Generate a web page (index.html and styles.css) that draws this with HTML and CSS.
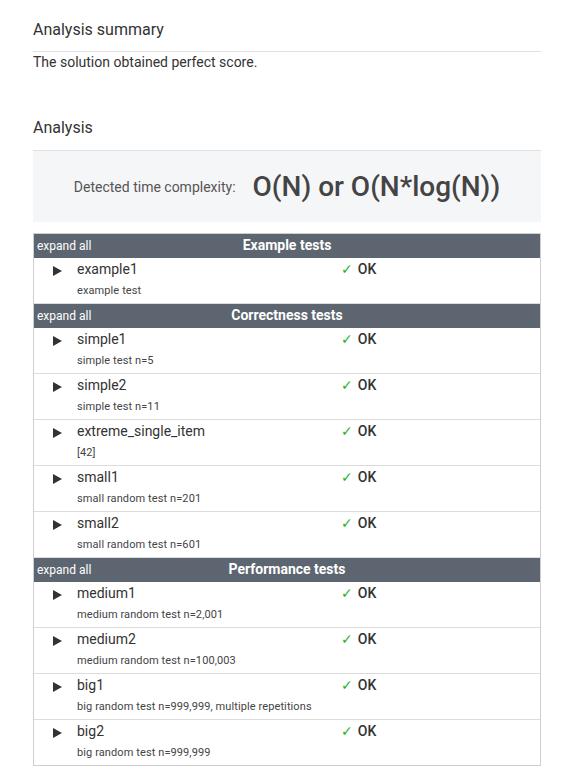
FILE: index.html
```html
<!DOCTYPE html>
<html>
<head>
<meta charset="utf-8">
<link rel="stylesheet" href="styles.css">
</head>
<body>
<div class="page">
  <h2 class="heading">Analysis summary</h2>
  <div class="summary">The solution obtained perfect score.</div>

  <h2 class="heading heading-analysis">Analysis</h2>
  <div class="complexity">
    <span class="complexity-label">Detected time complexity:</span>
    <span class="complexity-value">O(N) or O(N*log(N))</span>
  </div>

  <div class="tests">
    <div class="group-head"><span class="expand">expand all</span><span class="group-title">Example tests</span></div>
    <div class="row"><span class="arrow"></span><div class="name">example1<div class="desc">example test</div></div><div class="result"><span class="check">✓</span>OK</div></div>

    <div class="group-head"><span class="expand">expand all</span><span class="group-title">Correctness tests</span></div>
    <div class="row"><span class="arrow"></span><div class="name">simple1<div class="desc">simple test n=5</div></div><div class="result"><span class="check">✓</span>OK</div></div>
    <div class="row"><span class="arrow"></span><div class="name">simple2<div class="desc">simple test n=11</div></div><div class="result"><span class="check">✓</span>OK</div></div>
    <div class="row"><span class="arrow"></span><div class="name">extreme_single_item<div class="desc">[42]</div></div><div class="result"><span class="check">✓</span>OK</div></div>
    <div class="row"><span class="arrow"></span><div class="name">small1<div class="desc">small random test n=201</div></div><div class="result"><span class="check">✓</span>OK</div></div>
    <div class="row"><span class="arrow"></span><div class="name">small2<div class="desc">small random test n=601</div></div><div class="result"><span class="check">✓</span>OK</div></div>

    <div class="group-head"><span class="expand">expand all</span><span class="group-title">Performance tests</span></div>
    <div class="row"><span class="arrow"></span><div class="name">medium1<div class="desc">medium random test n=2,001</div></div><div class="result"><span class="check">✓</span>OK</div></div>
    <div class="row"><span class="arrow"></span><div class="name">medium2<div class="desc">medium random test n=100,003</div></div><div class="result"><span class="check">✓</span>OK</div></div>
    <div class="row"><span class="arrow"></span><div class="name">big1<div class="desc">big random test n=999,999, multiple repetitions</div></div><div class="result"><span class="check">✓</span>OK</div></div>
    <div class="row"><span class="arrow"></span><div class="name">big2<div class="desc">big random test n=999,999</div></div><div class="result"><span class="check">✓</span>OK</div></div>
  </div>
</div>
</body>
</html>
```
FILE: styles.css
```css
html, body {
  margin: 0;
  padding: 0;
  background: #fff;
}
body {
  font-family: Roboto, "Liberation Sans", sans-serif;
  color: #333;
}
.page {
  margin-left: 33px;
  width: 508px;
  padding-top: 20px;
}
.heading {
  margin: 0;
  font-size: 16px;
  font-weight: 400;
  line-height: 20px;
  color: #333;
  padding-bottom: 11px;
  border-bottom: 1px solid #e0e0e0;
}
.summary {
  font-size: 14px;
  line-height: 18px;
  padding-top: 1px;
  color: #333;
}
.heading-analysis {
  margin-top: 47px;
  padding-bottom: 12px;
  border-bottom: 0;
}
.complexity {
  background: #f5f6f8;
  border-top: 1px solid #e0e0e0;
  height: 71px;
  display: flex;
  align-items: center;
  justify-content: center;
  gap: 17px;
}
.complexity-label {
  font-size: 14px;
  color: #555;
  padding-top: 1px;
}
.complexity-value {
  font-size: 28px;
  font-weight: 500;
  color: #444;
}
.tests {
  margin-top: 11px;
  border: 1px solid #cfcfcf;
  width: 506px;
}
.group-head {
  background: #5d6570;
  color: #fff;
  height: 24px;
  display: grid;
  grid-template-columns: 1fr;
  align-items: center;
}
.group-head > * {
  grid-row: 1;
  grid-column: 1;
}
.expand {
  font-size: 12px;
  padding-left: 3px;
  padding-top: 0;
}
.group-title {
  justify-self: center;
  font-size: 14px;
  font-weight: 700;
  padding-bottom: 2px;
}
.row {
  display: grid;
  grid-template-columns: 43px 264px 1fr;
  border-bottom: 1px solid #dcdcdc;
  height: 46px;
  box-sizing: border-box;
}
.row:last-child {
  border-bottom: 0;
  height: 45px;
}
.arrow {
  margin-top: 8px;
  margin-left: 19px;
  width: 0;
  height: 0;
  border-left: 9px solid #333;
  border-top: 5px solid transparent;
  border-bottom: 5px solid transparent;
}
.name {
  font-size: 14px;
  line-height: 18px;
  padding-top: 2px;
  color: #333;
}
.desc {
  font-size: 11px;
  line-height: 14px;
  margin-top: 6px;
  color: #444;
  letter-spacing: 0.1px;
}
.result {
  font-size: 14px;
  font-weight: 500;
  padding-top: 2px;
  line-height: 18px;
  color: #333;
}
.check {
  color: #2db32d;
  font-weight: 400;
  margin-right: 5px;
  font-family: "DejaVu Sans", sans-serif;
  font-size: 14px;
}
```
